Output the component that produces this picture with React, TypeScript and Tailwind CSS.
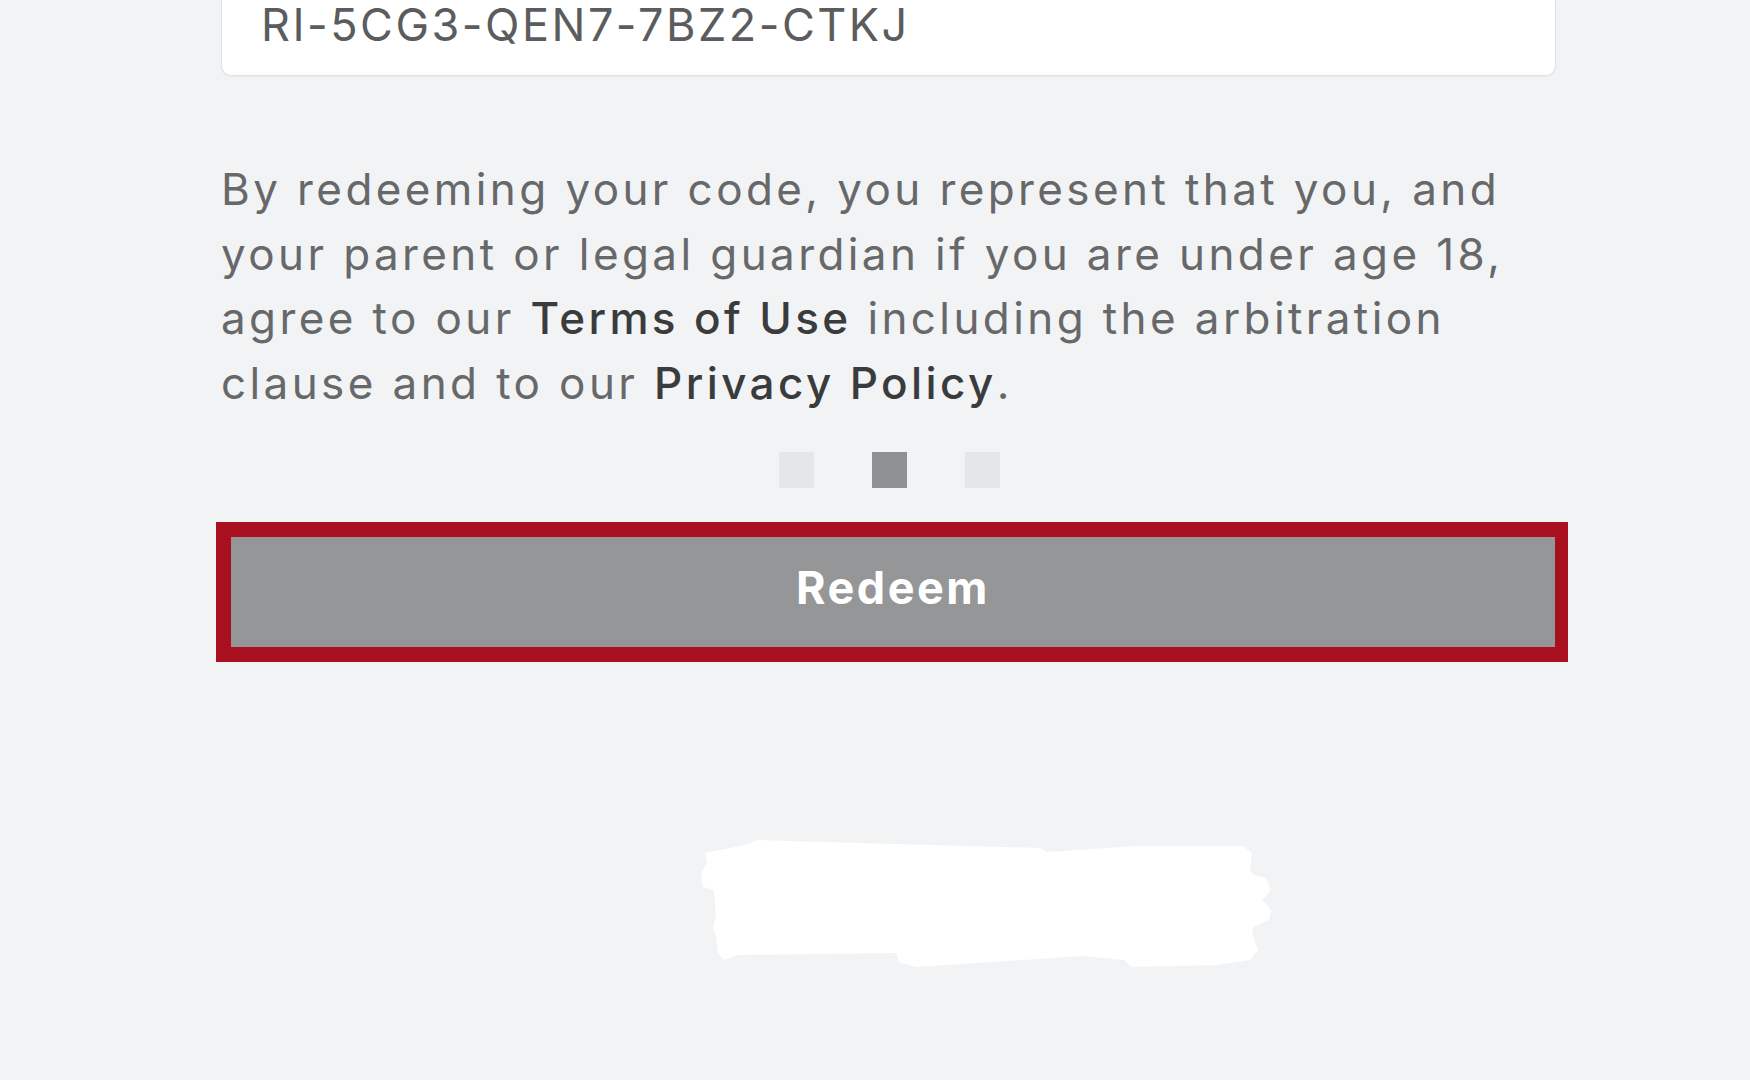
import React from 'react';

// Redeem code card (cropped view): code field, legal text, pager dots, redeem button
const font = { fontFamily: 'Inter, "Open Sans", "Liberation Sans", sans-serif' };

const dots = [false, true, false];

const App: React.FC = () => {
  return (
    <div className="min-h-[1080px] w-full bg-[#f2f3f4] overflow-hidden" style={font}>
      <div className="ml-[221px] w-[1335px] flex flex-col">
        {/* code input, top cut off by the crop */}
        <div className="h-[76px] bg-white border border-t-0 border-[#e1e2e4] rounded-b-[10px] shadow-[0_1px_2px_rgba(0,0,0,0.04)] pl-[39px] pt-[2px]">
          <div className="text-[45px] leading-[46px] text-[#5b5c5d] tracking-[2.5px]">RI-5CG3-QEN7-7BZ2-CTKJ</div>
        </div>

        <p className="mt-[81px] text-[44px] leading-[64.5px] text-[#67686a] tracking-[3.4px]">
          By redeeming your code, you represent that you, and<br />
          your parent or legal guardian if you are under age 18,<br />
          agree to our <span className="font-medium text-[#393b3d]">Terms of Use</span> including the arbitration<br />
          clause and to our <span className="font-medium text-[#393b3d]">Privacy Policy</span>.
        </p>

        <div className="mt-[37px] flex justify-center gap-[58px] pl-[2px]">
          {dots.map((on, i) => (
            <div key={i} className={`w-[35px] h-[36px] ${on ? 'bg-[#8f9092]' : 'bg-[#e5e6e7]'}`} />
          ))}
        </div>

        {/* red highlight frame drawn round the button */}
        <div className="mt-[34px] -ml-[5px] w-[1352px] border-[15px] border-r-[13px] border-[#a8101f]">
          <button className="w-full h-[110px] bg-[#959697] flex justify-center pt-[28px]">
            <span className="text-[45px] leading-[46px] font-bold text-white tracking-[2.5px]">Redeem</span>
          </button>
        </div>

        {/* white redaction scribble */}
        <svg className="mt-[176px] ml-[479px]" width="575" height="132" viewBox="0 0 575 132">
          <path
            fill="#ffffff"
            d="M5 15 L45 7 L57 2 L340 10 L347 14 L435 8 L543 8 L552 15 L550 32 L554 37 L566 40 L571 52 L562 62 L571 72 L569 82 L554 89 L552 95 L558 112 L550 122 L516 127 L432 129 L424 122 L382 118 L217 129 L200 125 L196 115 L37 117 L24 122 L18 115 L16 99 L13 89 L16 79 L14 52 L3 49 L1 35 L7 25 Z"
          />
        </svg>
      </div>
    </div>
  );
};

export default App;
